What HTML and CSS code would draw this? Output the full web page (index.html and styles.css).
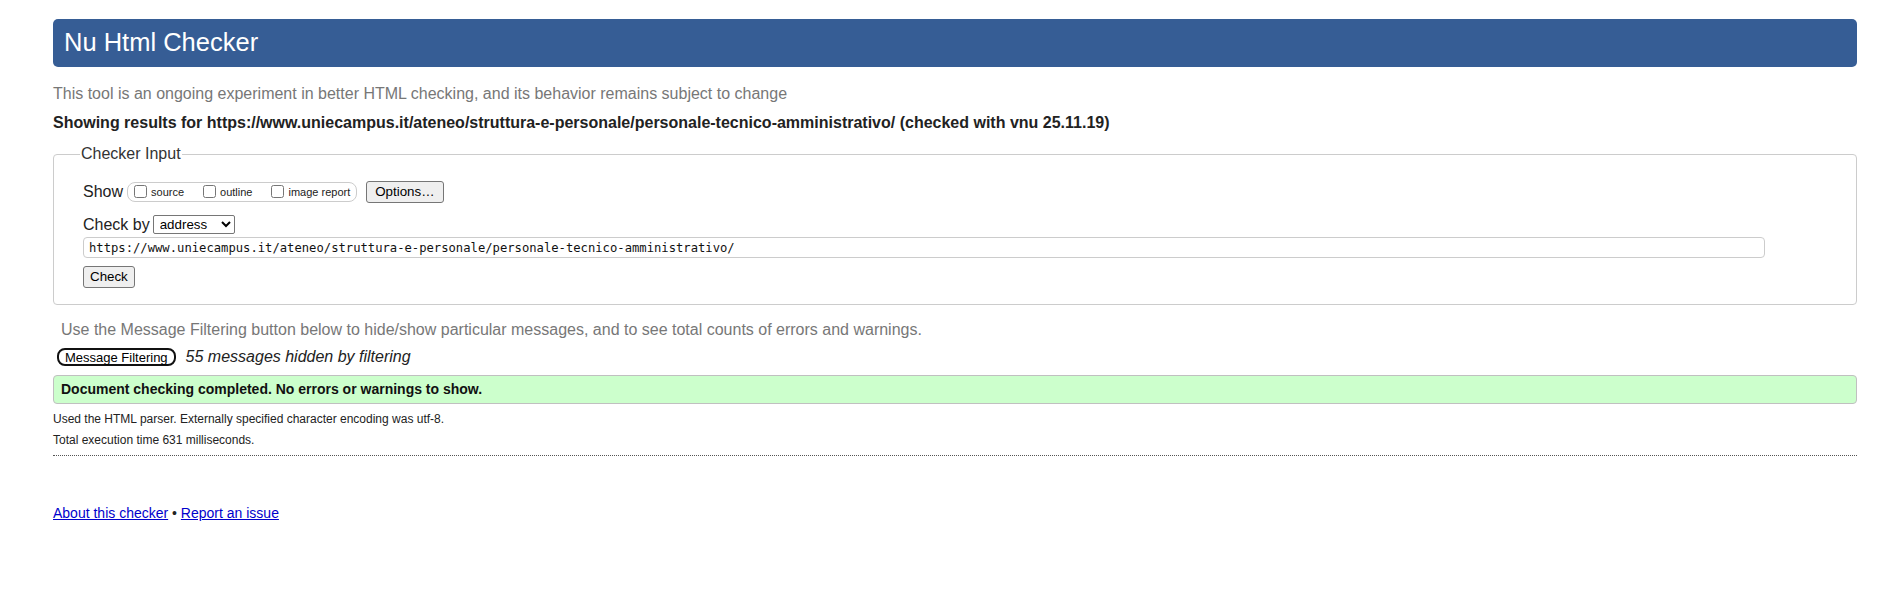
FILE: index.html
```html
<!DOCTYPE html>
<html lang="en">
<head>
<meta charset="utf-8">
<title>Showing results for https://www.uniecampus.it/ateneo/struttura-e-personale/personale-tecnico-amministrativo/ - Nu Html Checker</title>
<link rel="stylesheet" href="styles.css">
</head>
<body>
<h1 class="title">Nu Html Checker</h1>
<p class="intro">This tool is an ongoing experiment in better HTML checking, and its behavior remains subject to change</p>
<p class="results-for">Showing results for https://www.uniecampus.it/ateneo/struttura-e-personale/personale-tecnico-amministrativo/ (checked with vnu 25.11.19)</p>
<form class="checker-form">
  <fieldset class="checker-input">
    <legend class="legend">Checker Input</legend>
    <div class="row row-show">
      <span class="row-label">Show</span>
      <span class="show-group">
        <label class="opt"><input type="checkbox" class="cb">source</label>
        <label class="opt"><input type="checkbox" class="cb">outline</label>
        <label class="opt"><input type="checkbox" class="cb">image report</label>
      </span>
      <button type="button" class="btn btn-options">Options…</button>
    </div>
    <div class="row row-checkby">
      <label class="row-label" for="docselect">Check by</label>
      <select id="docselect" class="select">
        <option>address</option>
        <option>file upload</option>
        <option>text input</option>
      </select>
    </div>
    <input class="url" type="url" value="https://www.uniecampus.it/ateneo/struttura-e-personale/personale-tecnico-amministrativo/">
    <div class="row-submit"><button type="button" class="btn btn-check">Check</button></div>
  </fieldset>
</form>
<p class="filter-hint">Use the Message Filtering button below to hide/show particular messages, and to see total counts of errors and warnings.</p>
<div class="filter-row">
  <button type="button" class="btn-filter">Message Filtering</button>
  <span class="hidden-count">55 messages hidden by filtering</span>
</div>
<div class="success">Document checking completed. No errors or warnings to show.</div>
<p class="details details-first">Used the HTML parser. Externally specified character encoding was utf-8.</p>
<p class="details">Total execution time 631 milliseconds.</p>
<hr class="rule">
<p class="footer"><a class="link" href="#">About this checker</a> • <a class="link" href="#">Report an issue</a></p>
</body>
</html>
```

FILE: styles.css
```css
html, body {
  background: #fff;
}

body {
  margin: 0;
  padding: 19px 43px 40px 53px;
  font-family: "Liberation Sans", Arial, sans-serif;
  color: #222;
  font-size: 16px;
}

.title {
  margin: 0;
  height: 48px;
  box-sizing: border-box;
  padding: 0 0 2px 11px;
  line-height: 46px;
  font-size: 25.5px;
  font-weight: normal;
  color: #fff;
  background: #365d95;
  border-radius: 5px;
}

.intro {
  margin: 18px 0 0;
  line-height: 18px;
  color: #777;
}

.results-for {
  margin: 11px 0 0;
  line-height: 18px;
  font-weight: bold;
  color: #222;
}

.checker-form {
  margin: 13px 0 0;
}

.checker-input {
  margin: 0;
  padding: 18px 29px 16px 29px;
  border: 1px solid #ccc;
  border-radius: 4px;
}

.legend {
  padding: 0 1px;
  margin-left: -3px;
  line-height: 18px;
  color: #333;
}

.row {
  display: flex;
  align-items: center;
}

.row-show {
  height: 21px;
}

.row-label {
  color: #222;
  line-height: 18px;
}

.show-group {
  display: inline-flex;
  align-items: center;
  gap: 19px;
  height: 20px;
  box-sizing: border-box;
  margin-left: 4px;
  padding: 0 6px;
  border: 1px solid #ccc;
  border-radius: 8px;
}

.opt {
  display: inline-flex;
  align-items: center;
  font-size: 11px;
  color: #222;
}

.cb {
  width: 13px;
  height: 13px;
  margin: 0 4px 0 0;
}

.btn {
  font-family: "Liberation Sans", Arial, sans-serif;
  font-size: 13.3333px;
  color: #000;
  background: #efefef;
  border: 1px solid #767676;
  border-radius: 3px;
  height: 22px;
  box-sizing: border-box;
  line-height: 18px;
}

.btn-options {
  margin-left: 9px;
  padding: 0 8px;
}

.row-checkby {
  margin-top: 13px;
  height: 19px;
}

.select {
  margin-left: 3px;
  width: 82px;
  height: 19px;
  box-sizing: border-box;
  font-family: "Liberation Sans", Arial, sans-serif;
  font-size: 13.3333px;
  color: #000;
  border: 1px solid #767676;
  border-radius: 2px;
  background: #fff;
  padding: 0 0 0 2px;
}

.url {
  display: block;
  margin: 3px 0 0;
  width: 1682px;
  height: 21px;
  box-sizing: border-box;
  padding: 0 5px;
  border: 1px solid #ccc;
  border-radius: 4px;
  font-family: "DejaVu Sans Mono", "Liberation Mono", monospace;
  font-size: 12.2px;
  color: #111;
  background: #fff;
}

.row-submit {
  margin-top: 8px;
  display: flex;
}

.btn-check {
  padding: 0 6px;
}

.filter-hint {
  margin: 16px 0 0;
  padding-left: 8px;
  line-height: 18px;
  color: #777;
}

.filter-row {
  display: flex;
  align-items: center;
  margin-top: 9px;
  height: 18px;
}

.btn-filter {
  margin-left: 4px;
  height: 18px;
  box-sizing: border-box;
  padding: 0 6px;
  border: 2px solid #111;
  border-radius: 8px;
  background: #fff;
  font-family: "Liberation Sans", Arial, sans-serif;
  font-size: 13px;
  line-height: 13px;
  color: #000;
}

.hidden-count {
  margin-left: 10px;
  font-style: italic;
  color: #222;
}

.success {
  margin-top: 9px;
  height: 29px;
  box-sizing: border-box;
  padding-left: 7px;
  line-height: 27px;
  font-size: 14px;
  font-weight: bold;
  color: #111;
  background: #ccffcc;
  border: 1px solid #c0c0c0;
  border-radius: 4px;
}

.details {
  margin: 7px 0 0;
  font-size: 12px;
  line-height: 14px;
  color: #222;
}

.details-first {
  margin-top: 8px;
}

.rule {
  margin: 8px 0 0;
  height: 0;
  border: 0;
  border-top: 1px dotted #555;
}

.footer {
  margin: 49px 0 0;
  font-size: 14px;
  line-height: 16px;
  color: #222;
}

.link {
  color: #0000cc;
}
```
